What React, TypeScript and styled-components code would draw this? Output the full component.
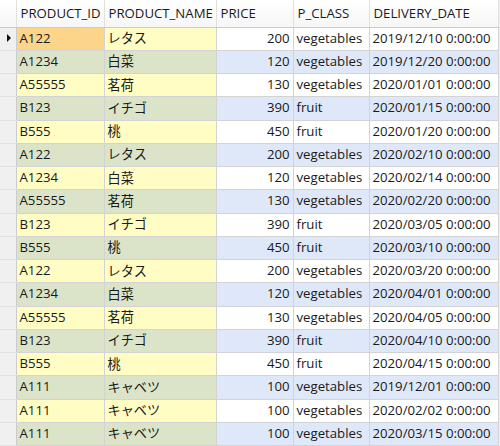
import React from 'react';
import styled, { createGlobalStyle } from 'styled-components';

interface IProductRow {
  id: string;
  name: string;
  price: number;
  pClass: string;
  date: string;
}

const rows: IProductRow[] = [
  { id: 'A122', name: 'レタス', price: 200, pClass: 'vegetables', date: '2019/12/10 0:00:00' },
  { id: 'A1234', name: '白菜', price: 120, pClass: 'vegetables', date: '2019/12/20 0:00:00' },
  { id: 'A55555', name: '茗荷', price: 130, pClass: 'vegetables', date: '2020/01/01 0:00:00' },
  { id: 'B123', name: 'イチゴ', price: 390, pClass: 'fruit', date: '2020/01/15 0:00:00' },
  { id: 'B555', name: '桃', price: 450, pClass: 'fruit', date: '2020/01/20 0:00:00' },
  { id: 'A122', name: 'レタス', price: 200, pClass: 'vegetables', date: '2020/02/10 0:00:00' },
  { id: 'A1234', name: '白菜', price: 120, pClass: 'vegetables', date: '2020/02/14 0:00:00' },
  { id: 'A55555', name: '茗荷', price: 130, pClass: 'vegetables', date: '2020/02/20 0:00:00' },
  { id: 'B123', name: 'イチゴ', price: 390, pClass: 'fruit', date: '2020/03/05 0:00:00' },
  { id: 'B555', name: '桃', price: 450, pClass: 'fruit', date: '2020/03/10 0:00:00' },
  { id: 'A122', name: 'レタス', price: 200, pClass: 'vegetables', date: '2020/03/20 0:00:00' },
  { id: 'A1234', name: '白菜', price: 120, pClass: 'vegetables', date: '2020/04/01 0:00:00' },
  { id: 'A55555', name: '茗荷', price: 130, pClass: 'vegetables', date: '2020/04/05 0:00:00' },
  { id: 'B123', name: 'イチゴ', price: 390, pClass: 'fruit', date: '2020/04/10 0:00:00' },
  { id: 'B555', name: '桃', price: 450, pClass: 'fruit', date: '2020/04/15 0:00:00' },
  { id: 'A111', name: 'キャベツ', price: 100, pClass: 'vegetables', date: '2019/12/01 0:00:00' },
  { id: 'A111', name: 'キャベツ', price: 100, pClass: 'vegetables', date: '2020/02/02 0:00:00' },
  { id: 'A111', name: 'キャベツ', price: 100, pClass: 'vegetables', date: '2020/03/15 0:00:00' },
];

// column widths incl. the right grid line
const columns = [16, 88, 112, 77, 76, 129];

const GlobalStyle = createGlobalStyle`
  html, body {
    margin: 0;
    padding: 0;
    background: #f0f0f0;
    overflow: hidden;
  }
  body {
    font-family: "Open Sans", "Noto Sans CJK JP", sans-serif;
  }
`;

const Frame = styled.div`
  width: 500px;
  height: 446px;
  overflow: hidden;
  background: #f0f0f0;
`;

const Grid = styled.table`
  border-collapse: collapse;
  border-spacing: 0;
  table-layout: fixed;
  width: 498px;
  font-size: 13.2px;
  color: #1a1a1a;

  th,
  td {
    box-sizing: border-box;
  }
`;

const HeadCell = styled.th`
  height: 27px;
  padding: 0 0 1px 4px;
  text-align: left;
  font-weight: 400;
  white-space: nowrap;
  overflow: hidden;
  background: linear-gradient(#ffffff, #f6f6f6);
  border-right: 1px solid #e0e0e0;
  border-bottom: 1px solid #cbcbcb;
`;

const Indicator = styled.td`
  padding: 0 0 0 7px;
  background: #f0f0f0;
  border-right: 1px solid #cbcbcb;
  border-bottom: 1px solid #e2e2e2;
`;

type Tone = 'key' | 'plain';

const Cell = styled.td<{ $tone: Tone; $even: boolean; $sel?: boolean; $right?: boolean }>`
  height: 23.25px;
  padding: 0 3px 2px 3px;
  white-space: nowrap;
  overflow: hidden;
  text-align: ${(p) => (p.$right ? 'right' : 'left')};
  border-right: 1px solid #d3d3d3;
  border-bottom: 1px solid #d3d3d3;
  background: ${(p) =>
    p.$sel
      ? '#fcd48a'
      : p.$tone === 'key'
        ? p.$even
          ? '#dbe4c9'
          : '#fffdc4'
        : p.$even
          ? '#dfe8f8'
          : '#ffffff'};
`;

const Arrow = styled.span`
  display: block;
  width: 0;
  height: 0;
  margin-bottom: 2px;
  border-top: 4px solid transparent;
  border-bottom: 4px solid transparent;
  border-left: 4px solid #111;
`;

export default function App() {
  return (
    <Frame>
      <GlobalStyle />
      <Grid>
        <colgroup>
          {columns.map((w, i) => (
            <col key={i} style={{ width: w }} />
          ))}
        </colgroup>
        <thead>
          <tr>
            <HeadCell />
            <HeadCell>PRODUCT_ID</HeadCell>
            <HeadCell>PRODUCT_NAME</HeadCell>
            <HeadCell>PRICE</HeadCell>
            <HeadCell>P_CLASS</HeadCell>
            <HeadCell>DELIVERY_DATE</HeadCell>
          </tr>
        </thead>
        <tbody>
          {rows.map((r, i) => {
            const even = i % 2 === 1;
            return (
              <tr key={i}>
                <Indicator>{i === 0 && <Arrow />}</Indicator>
                <Cell $tone="key" $even={even} $sel={i === 0}>{r.id}</Cell>
                <Cell $tone="key" $even={even}>{r.name}</Cell>
                <Cell $tone="plain" $even={even} $right>{r.price}</Cell>
                <Cell $tone="plain" $even={even}>{r.pClass}</Cell>
                <Cell $tone="plain" $even={even}>{r.date}</Cell>
              </tr>
            );
          })}
        </tbody>
      </Grid>
    </Frame>
  );
}
